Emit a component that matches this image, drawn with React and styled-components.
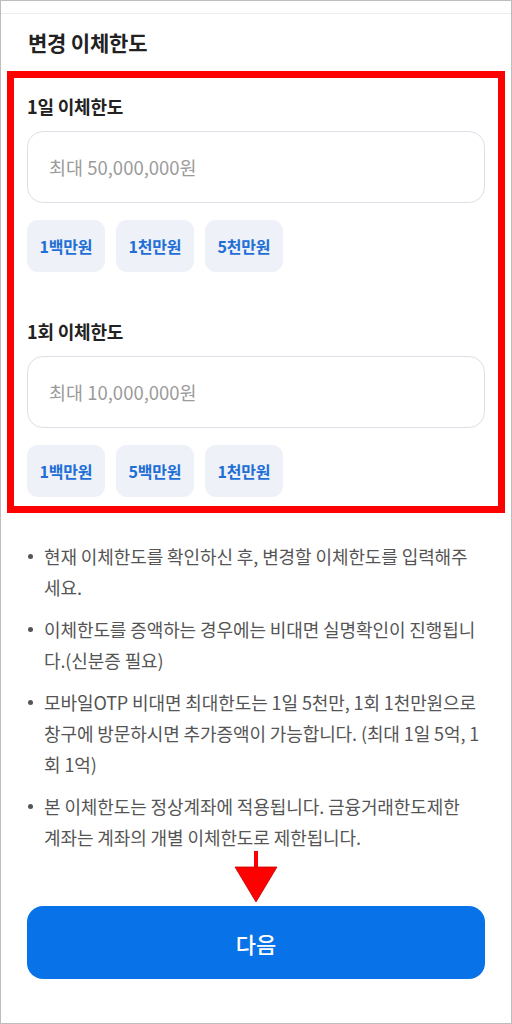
import React from 'react';
import styled, { createGlobalStyle } from 'styled-components';

const GlobalStyle = createGlobalStyle`
  html, body {
    margin: 0;
    padding: 0;
    background: #fff;
  }
  body {
    font-family: "Noto Sans CJK KR", "Noto Sans", sans-serif;
    color: #222;
  }
  * { box-sizing: border-box; }
`;

const Frame = styled.div`
  width: 512px;
  height: 1024px;
  border: 1px solid #bdbdbd;
  display: flex;
  flex-direction: column;
  overflow: hidden;
`;

const TopBar = styled.div`
  height: 13px;
  border-bottom: 1px solid #ececec;
  flex-shrink: 0;
`;

const Title = styled.h1`
  margin: 14px 0 0 27px;
  font-size: 21px;
  line-height: 28px;
  font-weight: 600;
  color: #222;
  letter-spacing: -0.2px;
`;

const Highlight = styled.section`
  margin: 15px 6px 0;
  border: 7px solid #ff0000;
  padding: 16px 13px 9px 13px;
  display: flex;
  flex-direction: column;
`;

const Field = styled.div`
  display: flex;
  flex-direction: column;
  margin-top: ${p => (p.$first ? '0' : '47px')};
`;

const Label = styled.label`
  font-size: 18px;
  line-height: 24px;
  font-weight: 600;
  color: #222;
  letter-spacing: -0.2px;
`;

const AmountInput = styled.input`
  margin-top: 13px;
  height: 72px;
  width: 100%;
  border: 1px solid #dcdfe6;
  border-radius: 16px;
  padding: 0 21px;
  font-family: inherit;
  font-size: 18.5px;
  color: #222;
  background: #fff;
  outline: none;

  &::placeholder {
    color: #9b9b9b;
  }
`;

const ChipRow = styled.div`
  display: flex;
  gap: 11px;
  margin-top: 17px;
`;

const Chip = styled.button`
  width: 78px;
  height: 52px;
  border: none;
  border-radius: 11px;
  background: #eef1f7;
  color: #1f6fd6;
  font-family: inherit;
  font-size: 16px;
  font-weight: 700;
  letter-spacing: -0.2px;
  padding: 0;
  cursor: pointer;
`;

const Notes = styled.ul`
  list-style: none;
  margin: 28px 0 0;
  padding: 0 22px 0 24px;
  display: flex;
  flex-direction: column;
  gap: 11px;
`;

const Note = styled.li`
  display: flex;
  align-items: flex-start;
  font-size: 18px;
  line-height: 31px;
  color: #555;
  letter-spacing: -0.1px;
`;

const Dot = styled.span`
  flex: 0 0 19px;
  height: 31px;
  display: flex;
  align-items: center;

  &::before {
    content: '';
    width: 5px;
    height: 5px;
    border-radius: 50%;
    background: #555;
    margin-left: 3px;
  }
`;

const NoteText = styled.span`
  flex: 1;
  display: flex;
  flex-direction: column;
`;

const NoteLine = styled.span`
  white-space: nowrap;
`;

const ButtonWrap = styled.div`
  position: relative;
  margin: 53px 26px 0;
`;

const NextButton = styled.button`
  width: 100%;
  height: 73px;
  border: none;
  border-radius: 16px;
  background: #0873e8;
  color: #fff;
  font-family: inherit;
  font-size: 22px;
  font-weight: 500;
  cursor: pointer;
`;

const Arrow = styled.svg`
  position: absolute;
  left: 50%;
  top: -55px;
  transform: translateX(-50%);
  width: 44px;
  height: 52px;
  overflow: visible;
`;

const fields = [
  { label: '1일 이체한도', placeholder: '최대 50,000,000원', chips: ['1백만원', '1천만원', '5천만원'] },
  { label: '1회 이체한도', placeholder: '최대 10,000,000원', chips: ['1백만원', '5백만원', '1천만원'] },
];

// lines kept as they wrap on the device
const notes = [
  ['현재 이체한도를 확인하신 후, 변경할 이체한도를 입력해주', '세요.'],
  ['이체한도를 증액하는 경우에는 비대면 실명확인이 진행됩니', '다.(신분증 필요)'],
  ['모바일OTP 비대면 최대한도는 1일 5천만, 1회 1천만원으로', '창구에 방문하시면 추가증액이 가능합니다. (최대 1일 5억, 1', '회 1억)'],
  ['본 이체한도는 정상계좌에 적용됩니다. 금융거래한도제한', '계좌는 계좌의 개별 이체한도로 제한됩니다.'],
];

export default function App() {
  return (
    <>
      <GlobalStyle />
      <Frame>
        <TopBar />
        <Title>변경 이체한도</Title>

        <Highlight>
          {fields.map((f, i) => (
            <Field key={f.label} $first={i === 0}>
              <Label>{f.label}</Label>
              <AmountInput type="text" inputMode="numeric" placeholder={f.placeholder} />
              <ChipRow>
                {f.chips.map(c => (
                  <Chip key={c} type="button">{c}</Chip>
                ))}
              </ChipRow>
            </Field>
          ))}
        </Highlight>

        <Notes>
          {notes.map(lines => (
            <Note key={lines[0]}>
              <Dot />
              <NoteText>
                {lines.map(l => (
                  <NoteLine key={l}>{l}</NoteLine>
                ))}
              </NoteText>
            </Note>
          ))}
        </Notes>

        <ButtonWrap>
          {/* red pointer arrow */}
          <Arrow viewBox="0 0 44 52">
            <rect x="20" y="0" width="4" height="17" fill="#ff0000" />
            <polygon points="1,16 43,16 22,51" fill="#ff0000" stroke="#c00000" strokeWidth="0.8" />
          </Arrow>
          <NextButton type="button">다음</NextButton>
        </ButtonWrap>
      </Frame>
    </>
  );
}
